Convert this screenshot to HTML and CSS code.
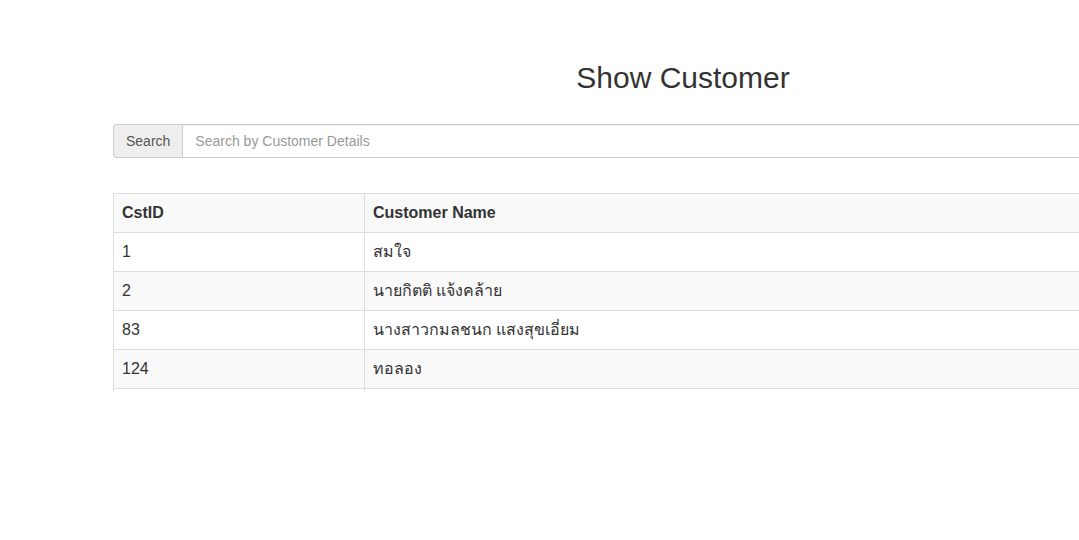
FILE: index.html
```html
<!DOCTYPE html>
<html>

<head>
    <title>Show Customer</title>
    <meta charset="utf-8">
    <meta name="viewport" content="width=device-width">
    <link rel="stylesheet" href="styles.css">
</head>

<body>
    <div class="container">
        <h2 class="page-title">Show Customer</h2>

        <div class="input-group">
            <span class="input-group-addon">Search</span>
            <input type="text" class="form-control" placeholder="Search by Customer Details">
        </div>

        <table class="customer-table">
            <tr class="head-row">
                <th class="col-id">CstID</th>
                <th>Customer Name</th>
            </tr>
            <tr>
                <td>1</td>
                <td>สมใจ</td>
            </tr>
            <tr>
                <td>2</td>
                <td>นายกิตติ แจ้งคล้าย</td>
            </tr>
            <tr>
                <td>83</td>
                <td>นางสาวกมลชนก แสงสุขเอี่ยม</td>
            </tr>
            <tr>
                <td>124</td>
                <td>ทอลอง</td>
            </tr>
            <tr class="cut-row">
                <td></td>
                <td></td>
            </tr>
        </table>
    </div>
</body>

</html>
```

FILE: styles.css
```css
html, body {
    margin: 0px;
    background-color: #fff;
    color: #333;
    font-family: "Liberation Sans", Arial, "Noto Sans", sans-serif;
    font-size: 14px;
    overflow: hidden;
}
.container {
    width: 1140px;
    margin-left: 98px;
    padding: 41px 15px 0px 15px;
}
.page-title {
    margin: 20px 0px 30px 0px;
    font-size: 30px;
    font-weight: normal;
    line-height: 33px;
    text-align: center;
}
.input-group {
    display: flex;
    height: 34px;
}
.input-group-addon {
    display: flex;
    align-items: center;
    padding: 0px 12px;
    background-color: #eee;
    border: 1px solid #ccc;
    border-right: none;
    border-radius: 4px 0px 0px 4px;
    color: #555;
    font-size: 14px;
}
.form-control {
    flex: 1;
    margin: 0px;
    padding: 6px 12px;
    border: 1px solid #ccc;
    border-radius: 0px 4px 4px 0px;
    font-family: inherit;
    font-size: 14px;
    color: #555;
    box-shadow: inset 0 1px 1px rgba(0, 0, 0, 0.075);
    outline: none;
}
.form-control::placeholder {
    color: #999;
}
.customer-table {
    width: 100%;
    margin-top: 35px;
    border-collapse: collapse;
    font-size: 16px;
}
.customer-table th, .customer-table td {
    padding: 8px;
    line-height: 22px;
    text-align: left;
    border: 1px solid #ddd;
}
.customer-table th {
    font-weight: bold;
}
.customer-table .col-id {
    width: 234px;
}
.customer-table tr:nth-child(odd) {
    background-color: #f9f9f9;
}
.customer-table .cut-row {
    background-color: #fff;
}
.customer-table .cut-row td {
    padding: 0px;
    height: 2px;
    line-height: 2px;
    border-bottom: none;
}
```
